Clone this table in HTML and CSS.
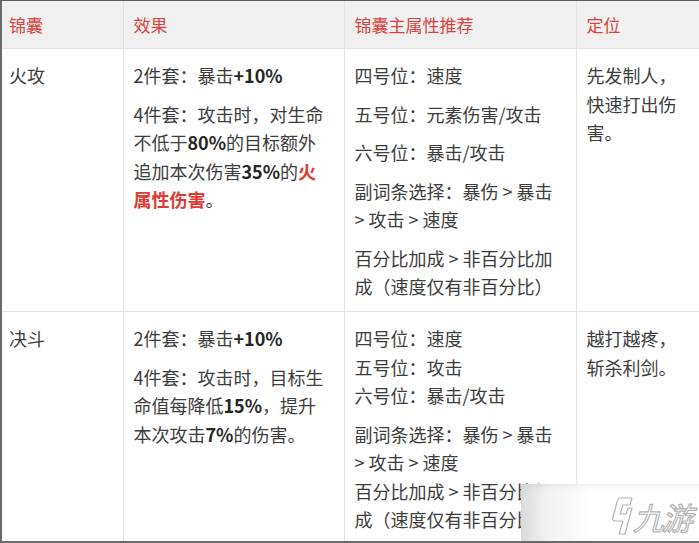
FILE: index.html
```html
<!DOCTYPE html>
<html lang="zh-CN">
<head>
<meta charset="utf-8">
<title>锦囊推荐</title>
<link rel="stylesheet" href="styles.css">
</head>
<body>
<div class="frame">
  <table class="sets">
    <colgroup>
      <col class="c1"><col class="c2"><col class="c3"><col class="c4">
    </colgroup>
    <thead>
      <tr>
        <th>锦囊</th>
        <th>效果</th>
        <th>锦囊主属性推荐</th>
        <th>定位</th>
      </tr>
    </thead>
    <tbody>
      <tr class="row1">
        <td><p>火攻</p></td>
        <td>
          <p>2件套：暴击<b>+10%</b></p>
          <p>4件套：攻击时，对生命不低于<b>80%</b>的目标额外追加本次伤害<b>35%</b>的<b class="red">火属性伤害</b>。</p>
        </td>
        <td>
          <p>四号位：速度</p>
          <p>五号位：元素伤害/攻击</p>
          <p>六号位：暴击/攻击</p>
          <p>副词条选择：暴伤 &gt; 暴击 &gt; 攻击 &gt; 速度</p>
          <p>百分比加成 &gt; 非百分比加成（速度仅有非百分比）</p>
        </td>
        <td class="pos"><p>先发制人，快速打出伤害。</p></td>
      </tr>
      <tr class="row2">
        <td><p>决斗</p></td>
        <td>
          <p>2件套：暴击<b>+10%</b></p>
          <p>4件套：攻击时，目标生命值每降低<b>15%</b>，提升本次攻击<b>7%</b>的伤害。</p>
        </td>
        <td>
          <p>四号位：速度<br>五号位：攻击<br>六号位：暴击/攻击</p>
          <p>副词条选择：暴伤 &gt; 暴击 &gt; 攻击 &gt; 速度<br>百分比加成 &gt; 非百分比加成（速度仅有非百分比）</p>
        </td>
        <td class="pos"><p>越打越疼，<br>斩杀利剑。</p></td>
      </tr>
    </tbody>
  </table>

  <div class="watermark">
    <svg class="logo-mark" viewBox="0 0 22 40" width="22" height="40" aria-hidden="true">
      <path d="M9 2 L21 2 L19 9 L12 9 L9 18 L15 18 L17 12 L21 12 L14 38 L8 38 L12 25 L4 25 Q1 25 2 21 L6 6 Q7 2 9 2 Z" fill="#fff" stroke="#b4b4b4" stroke-width="1.2" stroke-linejoin="round"/>
    </svg>
    <span class="logo-text">九游</span>
  </div>
</div>
</body>
</html>
```

FILE: styles.css
```css
html, body {
  margin: 0;
  padding: 0;
  background: #ffffff;
}

body {
  font-family: "Noto Sans CJK SC", "Noto Sans", "Liberation Sans", sans-serif;
  font-size: 18px;
  color: #3d3d3d;
}

.frame {
  position: relative;
  width: 699px;
  height: 543px;
  box-sizing: border-box;
  border-top: 1px solid #5a5a5a;
  border-left: 2px solid #6a6a6a;
  border-bottom: 2px solid #6a6a6a;
  overflow: hidden;
}

.sets {
  border-collapse: collapse;
  table-layout: fixed;
  width: 740px;
}

.c1 { width: 121px; }
.c2 { width: 221px; }
.c3 { width: 232px; }
.c4 { width: 166px; }

.sets th,
.sets td {
  border: 1px solid #e2e2e2;
  text-align: left;
  vertical-align: top;
  padding: 0 14px 0 10px;
}

.sets tr > :first-child { border-left: none; padding-left: 7px; }

.sets thead tr:first-child th { border-top: none; }

.sets th {
  height: 47px;
  vertical-align: middle;
  background: #f0f0f1;
  color: #d8433d;
  font-weight: normal;
  font-size: 17px;
}

.sets td {
  padding-top: 12px;
  padding-bottom: 0;
  line-height: 28.5px;
}

.row1 td { height: 250px; }
.row2 td { height: 260px; }

.sets p {
  margin: 0 0 10px 0;
}

.sets b {
  font-weight: bold;
  color: #262626;
}

.sets b.red {
  color: #dd3b33;
}

.pos { line-height: 29px; }
.pos p { width: 100px; }

.watermark {
  position: absolute;
  left: 519px;
  top: 483px;
  width: 180px;
  height: 60px;
  background: linear-gradient(to right, #dadada 0%, #f2f2f2 14%, #ffffff 40%, #ffffff 100%);
  box-shadow: inset 0 6px 8px -6px rgba(0,0,0,0.10);
  display: flex;
  align-items: center;
  justify-content: flex-end;
  gap: 3px;
  padding-right: 7px;
  box-sizing: border-box;
}

.logo-mark {
  display: block;
  margin-top: 4px;
}

.logo-text {
  font-family: "Noto Sans CJK SC", sans-serif;
  font-size: 31px;
  font-weight: normal;
  color: #ffffff;
  -webkit-text-stroke: 1.2px #b2b2b2;
  letter-spacing: -2px;
  transform: skewX(-14deg);
  line-height: 1;
  margin-top: 4px;
}
```
